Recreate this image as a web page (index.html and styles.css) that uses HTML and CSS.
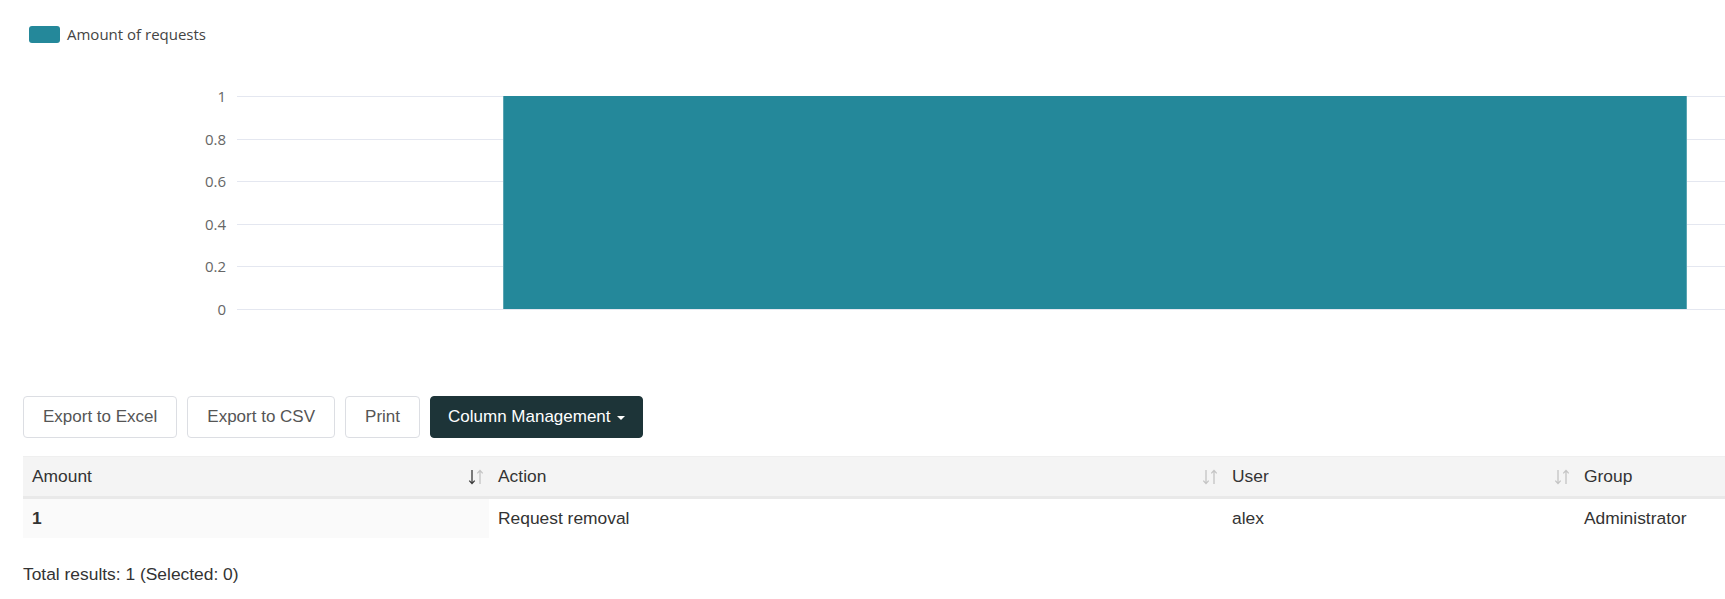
FILE: index.html
```html
<!DOCTYPE html>
<html lang="en">
<head>
  <meta charset="UTF-8">
  <meta name="viewport" content="width=device-width, initial-scale=1">
  <title>Request statistics</title>
  <link rel="stylesheet" href="styles.css">
</head>
<body>

  <div class="page">

    <!-- Chart -->
    <div class="chart">
      <div class="legend"><span class="swatch"></span>Amount of requests</div>
      <div class="chart-body">
        <div class="y-axis">
          <span>1</span>
          <span>0.8</span>
          <span>0.6</span>
          <span>0.4</span>
          <span>0.2</span>
          <span>0</span>
        </div>
        <div class="plot">
          <div class="bar"></div>
        </div>
      </div>
    </div>

    <!-- Toolbar -->
    <div class="toolbar">
      <button class="btn">Export to Excel</button>
      <button class="btn">Export to CSV</button>
      <button class="btn">Print</button>
      <button class="btn btn-dark">Column Management <span class="caret"></span></button>
    </div>

    <!-- Results table -->
    <div class="table-wrap">
      <table>
        <colgroup>
          <col class="col-amount">
          <col class="col-action">
          <col class="col-user">
          <col class="col-group">
        </colgroup>
        <thead>
          <tr>
            <th>
              <div class="th-inner">Amount
                <svg class="sort active" viewBox="0 0 18 16" width="18" height="16">
                  <path class="down" d="M5 1v13.5M2.3 11.6L5 14.6l2.7-3"/>
                  <path class="up" d="M13 15V1.5M10.3 4.4L13 1.4l2.7 3"/>
                </svg>
              </div>
            </th>
            <th>
              <div class="th-inner">Action
                <svg class="sort" viewBox="0 0 18 16" width="18" height="16">
                  <path class="down" d="M5 1v13.5M2.3 11.6L5 14.6l2.7-3"/>
                  <path class="up" d="M13 15V1.5M10.3 4.4L13 1.4l2.7 3"/>
                </svg>
              </div>
            </th>
            <th>
              <div class="th-inner">User
                <svg class="sort" viewBox="0 0 18 16" width="18" height="16">
                  <path class="down" d="M5 1v13.5M2.3 11.6L5 14.6l2.7-3"/>
                  <path class="up" d="M13 15V1.5M10.3 4.4L13 1.4l2.7 3"/>
                </svg>
              </div>
            </th>
            <th>
              <div class="th-inner">Group
                <svg class="sort" viewBox="0 0 18 16" width="18" height="16">
                  <path class="down" d="M5 1v13.5M2.3 11.6L5 14.6l2.7-3"/>
                  <path class="up" d="M13 15V1.5M10.3 4.4L13 1.4l2.7 3"/>
                </svg>
              </div>
            </th>
          </tr>
        </thead>
        <tbody>
          <tr>
            <td class="sorted"><strong>1</strong></td>
            <td>Request removal</td>
            <td>alex</td>
            <td>Administrator</td>
          </tr>
        </tbody>
      </table>
    </div>

    <p class="total">Total results: 1 (Selected: 0)</p>

  </div>

</body>
</html>
```

FILE: styles.css
```css
body {
  margin: 0;
  font-family: 'Liberation Sans', Arial, sans-serif;
  color: #333;
  background-color: #fff;
  overflow-x: hidden;
}
.page {
  padding-left: 23px;
  overflow: hidden;
}

/* Chart */
.chart {
  padding-top: 24px;
  font-family: 'Open Sans', 'Noto Sans', sans-serif;
}
.legend {
  display: flex;
  align-items: center;
  height: 20px;
  font-size: 15px;
  color: #444;
}
.swatch {
  width: 31px;
  height: 17px;
  margin: 0 7px 0 6px;
  border-radius: 3px;
  background-color: #24889a;
}
.chart-body {
  display: flex;
  margin-top: 52px;
}
.y-axis {
  width: 203px;
  height: 214px;
  display: flex;
  flex-direction: column;
  justify-content: space-between;
  align-items: flex-end;
  font-size: 15px;
  color: #666;
}
.y-axis span {
  height: 1px;
  line-height: 1px;
}
.plot {
  flex: 1;
  height: 214px;
  margin-left: 11px;
  background: repeating-linear-gradient(to bottom, #e4e7f0 0, #e4e7f0 1px, transparent 1px, transparent 42.6px);
}
.bar {
  box-sizing: border-box;
  width: 1184px;
  height: 213px;
  margin-left: 266px;
  background-color: #24889a;
  border-left: 1px solid #5aa5b3;
  border-right: 1px solid #5aa5b3;
}

/* Toolbar */
.toolbar {
  display: flex;
  gap: 10px;
  margin-top: 86px;
}
.btn {
  height: 42px;
  padding: 0 19px;
  font-family: inherit;
  font-size: 17px;
  color: #555;
  background-color: #fff;
  border: 1px solid #dcdee3;
  border-radius: 4px;
  cursor: pointer;
}
.btn-dark {
  padding: 0 17px;
  color: #fff;
  background-color: #1d3438;
  border-color: #1d3438;
}
.caret {
  display: inline-block;
  width: 0;
  height: 0;
  margin-left: 2px;
  vertical-align: middle;
  border-left: 4px solid transparent;
  border-right: 4px solid transparent;
  border-top: 4px solid #fff;
}

/* Table */
.table-wrap {
  margin-top: 18px;
  overflow: hidden;
}
table {
  width: 2000px;
  table-layout: fixed;
  border-collapse: collapse;
  font-size: 17.4px;
}
.col-amount { width: 466px; }
.col-action { width: 734px; }
.col-user { width: 352px; }
.col-group { width: 448px; }
th {
  height: 39px;
  padding: 0 4px 0 9px;
  font-weight: normal;
  text-align: left;
  background-color: #f4f4f4;
  border-top: 1px solid #efefef;
  border-bottom: 3px solid #e9e9e9;
}
.th-inner {
  display: flex;
  align-items: center;
  justify-content: space-between;
}
.sort {
  fill: none;
  stroke-width: 1.3;
}
.sort path {
  stroke: #c4c4c4;
}
.sort.active .down {
  stroke: #3a3a3a;
}
td {
  height: 39px;
  padding: 0 9px;
}
td.sorted {
  background-color: #fafafa;
}
.total {
  margin: 26px 0 0;
  font-size: 17.4px;
  line-height: 20px;
}
```
